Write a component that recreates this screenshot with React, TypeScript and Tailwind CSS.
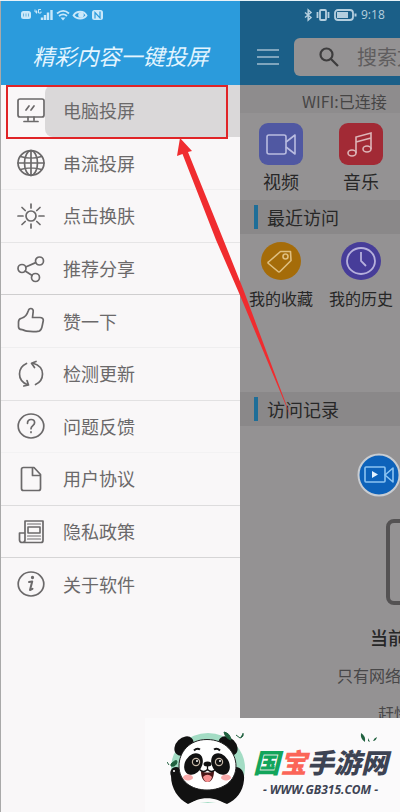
import { type ReactNode } from "react"

const MENU_ITEMS: { label: string; icon: ReactNode; line: string }[] = [
  {
    label: "电脑投屏",
    line: "border-transparent",
    icon: (
      <>
        <rect x="1" y="2" width="26" height="18" rx="2" />
        <path d="M9 13l3-4M14 13l3-4M11 20v3M17 20v3M7 24.500h14" />
      </>
    ),
  },
  {
    label: "串流投屏",
    line: "border-[#f0eff0]",
    icon: (
      <>
        <ellipse cx="14" cy="14" rx="13" ry="12.300" />
        <ellipse cx="14" cy="14" rx="6.500" ry="12.300" />
        <path d="M14 1.700v24.600M1 14h26M3.500 7.500c6 2 15 2 21 0M3.500 20.500c6-2 15-2 21 0" />
      </>
    ),
  },
  {
    label: "点击换肤",
    line: "border-[#e6e5e6]",
    icon: (
      <>
        <circle cx="14" cy="14" r="5" />
        <path d="M14 2v4M14 22v4M1 14h5M22 14h5M5 5.500l3.200 3M19.800 19.500l3.200 3M5 22.500l3.200-3M19.800 8.500l3.200-3" />
      </>
    ),
  },
  {
    label: "推荐分享",
    line: "border-[#cfcecf]",
    icon: (
      <>
        <circle cx="5" cy="13.500" r="4" />
        <circle cx="22.500" cy="6" r="4" />
        <circle cx="18.500" cy="22.500" r="4" />
        <path d="M8.700 12l10-4.400M8.200 16l7 4.500" />
      </>
    ),
  },
  {
    label: "赞一下",
    line: "border-[#efeeef]",
    icon: (
      <path d="M1.500 15c0-2.200 1-3.200 3-3.700 3-.8 5.500-3.300 6.700-7.300.4-1.500 1.400-2.500 2.600-2.500 1.700 0 2.700 1.500 2.400 3.200L15.500 10.500H23c2.200 0 3.500 1.200 3.300 3l-.8 4c-.6 3.500-1.200 6-3.500 6.600-3 .6-9 .5-12 .1-2.500-.3-3-1.300-5-1.500-2.500-.2-3.500-1-3.500-3z" />
    ),
  },
  {
    label: "检测更新",
    line: "border-[#e2e1e2]",
    icon: (
      <>
        <path d="M9.500 3.500C5 5.500 2.500 9.500 2.500 14c0 4.500 2.500 8.500 8 10.800M10 20.500l1.500 4.500-4.700 1" />
        <path d="M18.500 24.500c4.500-2 7-6 7-10.500 0-5-3-9-9.500-10.800M19 1.500l-4.500 1.700 3 4.300" />
      </>
    ),
  },
  {
    label: "问题反馈",
    line: "border-[#f3f2f3]",
    icon: (
      <>
        <ellipse cx="14" cy="14" rx="12.800" ry="12" />
        <path d="M10.500 11.300c0-2.300 1.400-3.800 3.600-3.800s3.500 1.400 3.500 3.200c0 2.800-3.600 3-3.600 6M14 19.800v.7" />
      </>
    ),
  },
  {
    label: "用户协议",
    line: "border-[#dddcdd]",
    icon: (
      <path d="M6.500 2.500h10.500l6.500 7v14c0 1-.8 2-2 2h-15c-1.200 0-2-1-2-2v-19c0-1.200.8-2 2-2zM15.500 2.500v8h8" />
    ),
  },
  {
    label: "隐私政策",
    line: "border-[#d6d5d6]",
    icon: (
      <>
        <path d="M8 3h18v19.500c0 1.300-1 2-2 2H5.500M8 3v19c0 1.500-1 2.500-2.800 2.500S2.500 23.500 2.500 22v-7H8" />
        <rect x="11" y="9" width="12" height="6" strokeWidth="1.600" />
        <path d="M10.500 6h13M10.500 18h13M10.500 21h13" strokeWidth="1.200" />
      </>
    ),
  },
  {
    label: "关于软件",
    line: "border-transparent",
    icon: (
      <>
        <ellipse cx="14" cy="14" rx="12.800" ry="12" />
        <path d="M12 12l3.200-.6-2.200 8.600 2.500-1.200" strokeWidth="2" />
        <circle cx="15.500" cy="7.500" r=".8" fill="currentColor" />
      </>
    ),
  },
]

const StatusIconsLeft = () => (
  <svg width="84" height="14" viewBox="0 0 84 14" fill="none" stroke="#c9e8fa" strokeWidth="1.500">
    <rect x="1" y="3" width="10" height="8" rx="2.500" fill="#c9e8fa" stroke="none" />
    <path d="M3.500 5.500v3M6 5.500v3M8.500 5.500v3" stroke="#6fb5de" strokeWidth="1" />
    <path d="M15 1.500v2.500h2.500M16.500 2.500v3M21 1.500h-2.500v3.500h2.500v-1.500" strokeWidth="1" />
    <path d="M22 12V9.500M25 12V7M28 12V4.500M31.500 12V2" strokeWidth="2.400" />
    <path d="M37 5.500c4-3.300 8.500-3.300 12 0M39 8c2.800-2.200 5.500-2.200 8 0" strokeWidth="1.800" />
    <path d="M40.500 9.500h5L43 12.500z" fill="#c9e8fa" stroke="none" />
    <path d="M53.500 7.500c3-5 10.500-5 13 0-2.500 4-10 4-13 0z" strokeWidth="1.800" />
    <circle cx="61" cy="7" r="2.800" fill="#c9e8fa" stroke="none" />
    <rect x="72" y="2" width="11" height="10" rx="2.500" fill="#c9e8fa" stroke="none" />
    <path d="M75 10.500V4.500l5 5.500V3.500" stroke="#2b9bdc" strokeWidth="1.200" />
  </svg>
)

const StatusIconsRight = () => (
  <svg width="53" height="14" viewBox="0 0 53 14" fill="none" stroke="#b5cfdf" strokeWidth="1.800">
    <path d="M1 4.500l6 5L4.200 12V2L7 4.500l-6 5" strokeWidth="1.500" />
    <rect x="16" y="2" width="6" height="10" rx="1" />
    <path d="M13.500 4v6M24.500 4v6" />
    <rect x="31" y="2" width="18" height="10" rx="3" />
    <rect x="33" y="4" width="11" height="6" fill="#b5cfdf" stroke="none" />
    <path d="M51.500 5.500v3" strokeWidth="2" />
  </svg>
)

const SectionTitle = ({ children }: { children: ReactNode }) => (
  <h2 className="flex h-[34px] items-center gap-[9px] bg-[#8a8889] pl-[14px] text-[18px] leading-8 text-[#272727]">
    <span className="h-6 w-1 bg-[#1f6e98]" />
    {children}
  </h2>
)

const PandaLogo = () => (
  <svg width="82" height="82" viewBox="0 0 82 82" className="shrink-0">
    <ellipse cx="41" cy="40" rx="37" ry="35" fill="#a3dcc4" />
    <ellipse cx="17" cy="18" rx="11" ry="8" transform="rotate(-45 17 18)" fill="#111" />
    <ellipse cx="61" cy="18" rx="11" ry="8" transform="rotate(45 61 18)" fill="#111" />
    <path d="M4 48c-2-5 1-9 5-9 5 0 7 5 7 10 14 14 34 14 44-1 0-4 2-8 7-9 7-1 11 5 10 13-1 12-8 20-17 24-13-6-28-6-39 0C11 71 4 60 4 48z" fill="#111" />
    <path d="M40 11.500c18 0 29 13 29 26.500 0 15-13 24-29 24S12 53 12 38c0-13.500 10-26.500 28-26.500z" fill="#fff" stroke="#222" strokeWidth="1" />
    <ellipse cx="26.500" cy="36" rx="8.500" ry="11.500" transform="rotate(30 26.500 36)" fill="#111" />
    <ellipse cx="53.500" cy="36" rx="8.500" ry="11.500" transform="rotate(-30 53.500 36)" fill="#111" />
    <circle cx="29" cy="34" r="4.200" fill="#c8b9a8" />
    <circle cx="29" cy="34" r="3" fill="#111" />
    <circle cx="30" cy="33" r="1" fill="#fff" />
    <circle cx="52" cy="34" r="4.200" fill="#c8b9a8" />
    <circle cx="52" cy="34" r="3" fill="#111" />
    <circle cx="53" cy="33" r="1" fill="#fff" />
    <path d="M27 22.500q3-3 6-1M47 21.500q3-2 6 1" stroke="#111" strokeWidth="2" fill="none" />
    <ellipse cx="40.500" cy="36" rx="4" ry="2.500" fill="#111" />
    <path d="M34 43c4 2 9 2 13 0 0 6-2 11-6.500 11S34 49 34 43z" fill="#4a1717" />
    <path d="M36 49c3-3 6-3 9 0-1 4-3 5-4.500 5S37 53 36 49z" fill="#f58e8e" />
    <path d="M40.500 38v3.500q-4 4-8 0M40.500 41.500q4 4 8 0" fill="none" stroke="#111" strokeWidth="1.300" />
    <ellipse cx="21" cy="49.500" rx="5" ry="3" fill="#f8a9a9" />
    <ellipse cx="59" cy="49.500" rx="5" ry="3" fill="#f8a9a9" />
    <circle cx="7" cy="43" r="1" fill="#fff" />
    <path d="M23 77c5-9 29-9 35 0-10-4-25-4-35 0z" fill="#fbfafa" />
    <path d="M57 4q6 1 7 8-6-2-7-8zM69 7l4 3M73 10q4-1 3-5M4 36q6-6 6-2-1 5-6 4zM0 34l2 3" fill="#20613f" stroke="#20613f" />
  </svg>
)

export default function App() {
  return (
    <div className="relative flex min-h-screen overflow-hidden border-t border-[#e8f2f8] bg-[#949293] font-['Noto_Sans_CJK_SC',sans-serif]">
      <aside className="w-3/5 shrink-0 border-l border-[#a9a9a9] bg-[#f9f7f8]">
        <header className="h-[84px] bg-[#2b9bdc]">
          <div className="flex h-7 items-center pl-[19px]">
            <StatusIconsLeft />
          </div>
          <h1 className="text-center text-[22px] leading-[52px] text-[#e4f5ff] italic">精彩内容一键投屏</h1>
        </header>
        <nav className="relative">
          <ul className="grid h-[526px] grid-rows-10">
            {MENU_ITEMS.map((item, i) => (
              <li key={item.label} className={`border-b ${item.line}`}>
                <button className="relative flex h-full w-full items-center gap-[18px] pl-4 text-[18px] text-[#6b696a]">
                  {i === 0 && <span className="absolute inset-y-0 right-0 left-11 rounded-l-lg bg-[#dad8d9]" />}
                  <svg
                    width="28"
                    height="28"
                    viewBox="0 0 28 28"
                    fill="none"
                    stroke="currentColor"
                    strokeWidth="1.700"
                    strokeLinecap="round"
                    strokeLinejoin="round"
                    className="relative"
                  >
                    {item.icon}
                  </svg>
                  <span className="relative">{item.label}</span>
                </button>
              </li>
            ))}
          </ul>
          <div className="absolute top-0 right-3 left-[5px] h-[54px] border-2 border-[#e02427]" />
        </nav>
      </aside>

      <main className="min-w-0 flex-1 overflow-hidden whitespace-nowrap">
        <header className="h-[84px] bg-[#1b5f88]">
          <div className="flex h-7 items-center gap-1 pl-16 text-[12px] font-medium text-[#b5cfdf]">
            <StatusIconsRight />
            <time className="font-['Open_Sans',sans-serif]">9:18</time>
          </div>
          <div className="flex items-center gap-[15px] pt-[9px] pl-[17px]">
            <button aria-label="菜单" className="shrink-0">
              <svg width="22" height="16" viewBox="0 0 22 16" stroke="#7fa5bd" strokeWidth="2">
                <path d="M0 1h22M0 8h22M0 15h22" />
              </svg>
            </button>
            <label className="flex h-[38px] shrink-0 items-center gap-[18px] rounded-md bg-[#949293] pl-[25px]">
              <svg width="20" height="20" viewBox="0 0 20 20" fill="none" stroke="#3d3c3d" strokeWidth="2.200" className="shrink-0">
                <circle cx="7.500" cy="7.500" r="6" />
                <path d="M12 12l7 7" />
              </svg>
              <input
                type="search"
                aria-label="搜索"
                placeholder="搜索文件"
                className="w-32 text-[20px] outline-none placeholder:text-[#5f5d5e]"
              />
            </label>
          </div>
        </header>

        <p className="h-7 bg-[#8e8c8d] pl-[62px] text-[16px] leading-8 text-[#464545]">WIFI:已连接</p>

        <div className="-mr-px grid h-[87px] grid-cols-2 pt-[10px] pl-[1px] text-center text-[18px] text-[#272727]">
          <a href="#video" className="flex flex-col items-center">
            <svg width="44" height="42" viewBox="0 0 44 42" fill="none" stroke="#b9bce0" strokeWidth="1.600" strokeLinejoin="round">
              <rect width="44" height="42" rx="9" fill="#5058a2" stroke="none" />
              <rect x="8" y="12" width="19" height="19" rx="2" />
              <path d="M27 19l9-7v19l-9-7" />
            </svg>
            <span className="leading-8">视频</span>
          </a>
          <a href="#music" className="flex flex-col items-center">
            <svg width="44" height="42" viewBox="0 0 44 42" fill="none" stroke="#ddb5b8" strokeWidth="1.600">
              <rect width="44" height="42" rx="9" fill="#a22a35" stroke="none" />
              <ellipse cx="13" cy="30" rx="4" ry="3" />
              <ellipse cx="28" cy="26" rx="4" ry="3" />
              <path d="M17 30V14l15-4v16M17 19l15-4" />
            </svg>
            <span className="leading-8">音乐</span>
          </a>
        </div>

        <SectionTitle>最近访问</SectionTitle>

        <div className="-mr-px grid h-[158px] grid-cols-2 pt-2 pl-[1px] text-[16px] text-[#272727]">
          <a href="#favorites" className="flex flex-col items-center">
            <svg width="40" height="38" viewBox="0 0 40 38" fill="none" stroke="#dfbf80" strokeWidth="1.600" strokeLinejoin="round">
              <ellipse cx="20" cy="19" rx="20" ry="19" fill="#a56c09" stroke="none" />
              <path d="M7.500 20l12-10.500h10l.5 9-11 11q-1 1-2 0l-9.500-8q-1-1 0-1.500z" />
              <circle cx="24.500" cy="14.500" r="2.500" />
            </svg>
            <span className="leading-9">我的收藏</span>
          </a>
          <a href="#history" className="flex flex-col items-center">
            <svg width="40" height="38" viewBox="0 0 40 38" fill="none" stroke="#b6b0dc" strokeWidth="1.800">
              <ellipse cx="20" cy="19" rx="20" ry="19" fill="#473d99" stroke="none" />
              <ellipse cx="20" cy="19" rx="14" ry="13" />
              <path d="M20 10v9l5 5" />
            </svg>
            <span className="leading-9">我的历史</span>
          </a>
        </div>

        <SectionTitle>访问记录</SectionTitle>

        <div className="pt-[93px] text-[16px] text-[#484748]">
          <div className="ml-[146px] h-[86px] w-[72px] rounded-lg border-4 border-[#545253]" />
          <p className="pt-4 pl-[130px] text-[18px] leading-8 font-medium text-[#272727]">当前</p>
          <p className="pt-[6px] pl-[97px] leading-8">只有网络</p>
          <p className="pt-[6px] pl-[138px] leading-8">赶快</p>
        </div>
      </main>

      {/* pointer from the list area up to the highlighted entry */}
      <svg width="240" height="420" viewBox="0 0 240 420" className="pointer-events-none absolute top-0 left-[100px]">
        <path d="M80 137L92 150l-4 1L123.500 239 143.500 289 192 419 139 292 116 239 82.500 153 77 155z" fill="#f02c2f" />
      </svg>

      <button aria-label="投屏播放" className="absolute top-[452px] -right-px">
        <svg width="44" height="44" viewBox="0 0 44 44" fill="none" stroke="#8cc4f2" strokeWidth="1.600" strokeLinejoin="round">
          <circle cx="22" cy="22" r="20.500" fill="#0d62ba" stroke="#c9cdd2" strokeWidth="2" />
          <rect x="8" y="14" width="20" height="15" rx="1" />
          <path d="M28 22l8-7v14z" />
          <path d="M15 18v7l6-3.500z" fill="#e3f2ff" stroke="none" />
        </svg>
      </button>

      <footer className="absolute right-0 bottom-0 flex h-[94px] w-[255px] items-start gap-1 bg-[#fbfafb] pt-[10px] pl-[22px]">
        <PandaLogo />
        <div className="relative flex flex-col items-center pt-4 whitespace-nowrap italic">
          <svg width="20" height="12" viewBox="0 0 20 12" fill="#20613f" className="absolute top-1 right-2">
            <path d="M1 1q5 3 4 9-5-3-4-9zM17 5q-1 4-4 4 1-3 4-4zM8 6l2 4-2-1z" />
          </svg>
          <p className="flex items-center text-[27px] leading-9 font-black text-[#3d4353]">
            <span className="text-[#13a55b]">国</span>
            <span className="text-[#fb6558]">宝</span>
            手游网
          </p>
          <p className="font-['Open_Sans',sans-serif] text-[12px] leading-5 font-bold text-[#3d4353]">- WWW.GB315.COM -</p>
        </div>
      </footer>
    </div>
  )
}
